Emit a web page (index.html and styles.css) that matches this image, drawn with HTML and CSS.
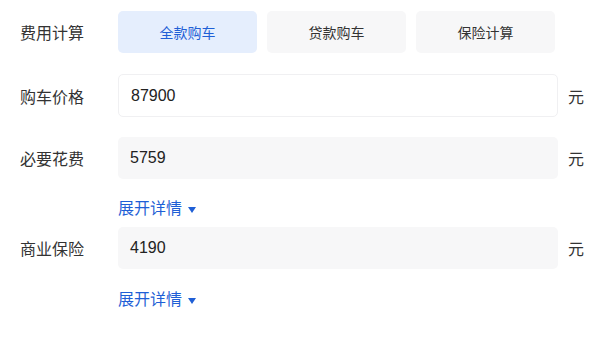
FILE: index.html
```html
<!DOCTYPE html>
<html lang="zh-CN">
<head>
  <meta charset="UTF-8" />
  <meta name="viewport" content="width=device-width, initial-scale=1.0" />
  <title>费用计算</title>
  <link rel="stylesheet" href="styles.css">
</head>
<body>
  <div class="calc">
    <div class="row">
      <span class="label">费用计算</span>
      <div class="tabs">
        <button class="tab active">全款购车</button>
        <button class="tab">贷款购车</button>
        <button class="tab">保险计算</button>
      </div>
    </div>

    <div class="row">
      <span class="label">购车价格</span>
      <div class="field plain">87900</div>
      <span class="unit">元</span>
    </div>

    <div class="row">
      <span class="label">必要花费</span>
      <div class="field">5759</div>
      <span class="unit">元</span>
    </div>
    <a class="more" href="#">展开详情 <span class="arrow"></span></a>

    <div class="row">
      <span class="label">商业保险</span>
      <div class="field">4190</div>
      <span class="unit">元</span>
    </div>
    <a class="more" href="#">展开详情 <span class="arrow"></span></a>
  </div>
</body>
</html>
```

FILE: styles.css
```css
body { margin: 0; background: #fff; font-family: "Liberation Sans", "Noto Sans CJK SC", sans-serif; color: #222; }
.calc { padding: 11px 0 0 20px; width: 575px; }
.row { display: flex; align-items: center; margin-bottom: 21px; }
.row + .row { margin-bottom: 20px; }
.label { width: 98px; flex: none; font-size: 16px; color: #333; }
.tabs { display: flex; gap: 10px; }
.tab { width: 139px; height: 42px; border: none; border-radius: 5px; background: #f7f7f8; color: #333; font-family: inherit; font-size: 14px; cursor: pointer; }
.tab.active { background: #e5eefd; color: #1f5fd6; }
.field { width: 440px; height: 42px; box-sizing: border-box; padding: 0 12px; display: flex; align-items: center; background: #f7f7f8; border-radius: 5px; font-size: 16px; }
.field.plain { background: #fff; border: 1px solid #f0f0f2; height: 43px; }
.unit { margin-left: 10px; font-size: 16px; color: #333; }
.more { display: block; margin: -1px 0 8px 98px; line-height: 20px; height: 20px; font-size: 16px; color: #1f5fd6; text-decoration: none; }
.row + .more { margin-top: 0; }
.arrow { display: inline-block; width: 0; height: 0; border-left: 4px solid transparent; border-right: 4px solid transparent; border-top: 6px solid #1f5fd6; vertical-align: middle; margin-left: 2px; }
```
